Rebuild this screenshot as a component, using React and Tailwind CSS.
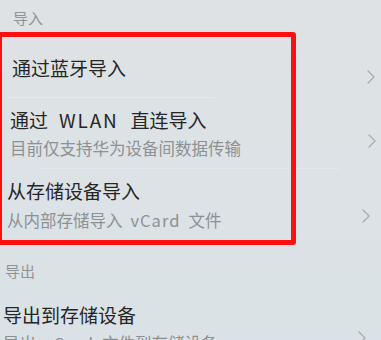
import React from "react";

const font = { fontFamily: '"Noto Sans CJK SC", "Noto Sans", sans-serif' };

function Chevron({ className }) {
  return (
    <svg width="8" height="14" viewBox="0 0 8 14" className={className}>
      <path d="M1 1 L7 7 L1 13" fill="none" stroke="#a7acb0" strokeWidth="1.3" strokeLinecap="round" strokeLinejoin="round" />
    </svg>
  );
}

export default function App() {
  return (
    <div
      className="relative w-[381px] h-[340px] overflow-hidden bg-gradient-to-b from-[#dfe2e5] to-[#dae2e7]"
      style={font}
    >
      <div className="flex flex-col">
        {/* Header 导入 */}
        <div className="h-[33px] pl-[13px] pt-[7px] text-[15px] leading-[22px] text-[#909497]">导入</div>

        {/* Row 1 */}
        <div className="h-[64px] flex justify-between pr-[6px]">
          <div className="pl-[12px] pt-[22px] text-[19px] leading-[26px] text-[#262626]">通过蓝牙导入</div>
          <Chevron className="mt-[37px]" />
        </div>
        <div className="h-px ml-[8px] w-[206px] bg-[#e6eaec]" />

        {/* Row 2 */}
        <div className="h-[70px] flex justify-between pr-[5px]">
          <div className="pl-[10px] pt-[9px]">
            <div className="flex text-[19px] leading-[26px] text-[#262626]">
              <span>通过</span>
              <span className="ml-[11px] mr-[12px] tracking-[1.8px]">WLAN</span>
              <span>直连导入</span>
            </div>
            <div className="mt-[4px] text-[16.5px] leading-[22px] text-[#8d9194]">目前仅支持华为设备间数据传输</div>
          </div>
          <Chevron className="mt-[36px]" />
        </div>
        <div className="h-px ml-[40px] w-[300px] bg-[#e3e7ea]" />

        {/* Row 3 */}
        <div className="h-[77px] flex justify-between pr-[11px]">
          <div className="pl-[7px] pt-[9px]">
            <div className="text-[19px] leading-[26px] text-[#262626]">从存储设备导入</div>
            <div className="mt-[5px] flex text-[16.5px] leading-[22px] text-[#8d9194]">
              <span>从内部存储导入</span>
              <span className="ml-[8px] mr-[8px] tracking-[1px]">vCard</span>
              <span>文件</span>
            </div>
          </div>
          <Chevron className="mt-[40px]" />
        </div>

        {/* Header 导出 */}
        <div className="h-[45px] pl-[5px] pt-[14px] text-[15px] leading-[22px] text-[#909497]">导出</div>

        {/* Row 4 */}
        <div className="h-[60px] flex justify-between pr-[15px]">
          <div className="pl-[3px] pt-[11px]">
            <div className="text-[19px] leading-[26px] text-[#262626]">导出到存储设备</div>
            <div className="mt-[4px] flex text-[16.5px] leading-[22px] text-[#8d9194]">
              <span>导出</span>
              <span className="ml-[8px] mr-[8px] tracking-[1px]">vCard</span>
              <span>文件到存储设备</span>
            </div>
          </div>
          <Chevron className="mt-[40px]" />
        </div>
      </div>

      {/* Red highlight box */}
      <div className="absolute left-[-3px] top-[32px] w-[299px] h-[213px] border-[5px] border-[#ff1010] rounded-[3px]" />
    </div>
  );
}
